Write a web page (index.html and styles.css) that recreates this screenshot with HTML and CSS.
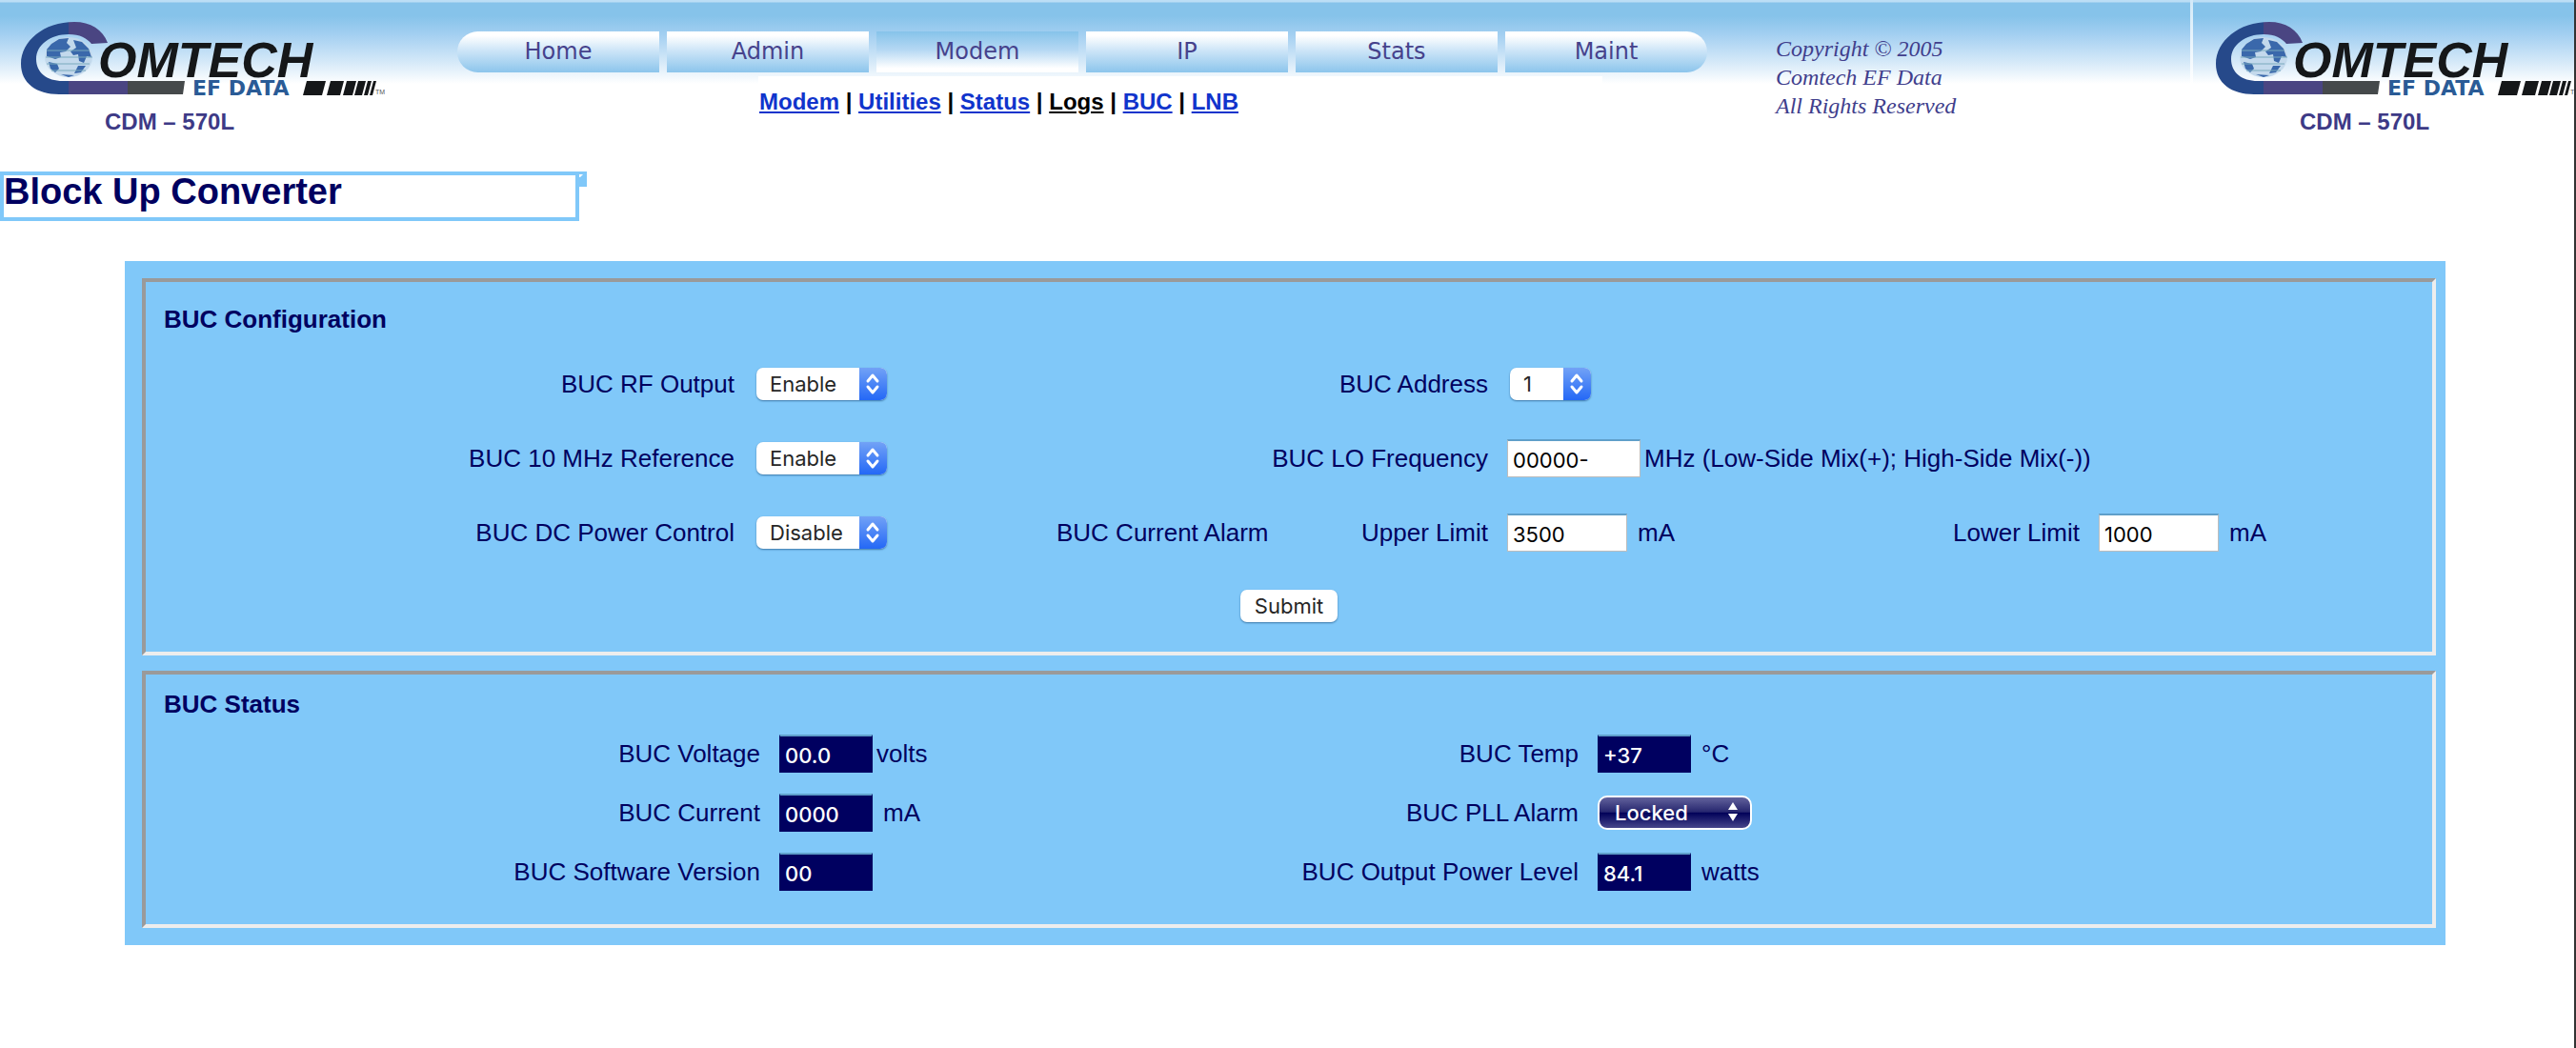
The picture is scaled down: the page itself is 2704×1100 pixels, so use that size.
FILE: index.html
```html
<!DOCTYPE html>
<html lang="en">
<head>
<meta charset="utf-8">
<title>CDM-570L - Block Up Converter</title>
<link rel="stylesheet" href="styles.css">
</head>
<body>
<svg class="defs" width="0" height="0" aria-hidden="true">
  <defs>
    <linearGradient id="swoosh" gradientUnits="userSpaceOnUse" x1="22" y1="0" x2="194" y2="0">
      <stop offset="0.29" stop-color="#26498a"/>
      <stop offset="0.29" stop-color="#4a4582"/>
      <stop offset="0.65" stop-color="#4a4582"/>
      <stop offset="0.65" stop-color="#45494b"/>
    </linearGradient>
    <symbol id="logo" viewBox="0 0 410 140">
      <path fill="url(#swoosh)" d="M113 45 C108 31 95 23 78 23 C46 23 22 43 22 67 C22 87 38 99 62 99 H192 L194 85 H66 C49 85 38 76 38 62 C38 47 53 36 72 36 C84 36 91 40 96 46 Z"/>
      <ellipse cx="72" cy="60" rx="25" ry="21" fill="#c3d9ec"/>
      <path fill="#3a68ab" d="M54 46 L62 41 L72 40 L70 45 L74 49 L69 54 L63 55 L64 60 L58 62 L49 59 L49 52 Z M77 42 L86 44 L93 51 L96 60 L91 59 L88 66 L83 64 L82 57 L77 58 L74 54 L80 50 Z M51 65 L60 67 L62 72 L58 76 L53 72 Z M82 69 L90 69 L85 76 L78 77 Z M64 78 L78 79 L72 81 Z"/>
      <path stroke="#78a9bd" stroke-width="1" fill="none" d="M49 53H94 M48 60H97 M49 67H94 M54 74H90"/>
      <text x="103" y="81" class="logo-name">OMTECH</text>
      <text x="202" y="100" class="logo-sub">EF DATA</text>
      <path fill="#151719" d="M322 85H342L338 100H318Z M347 85H361L357 100H343Z M364 85H374L370 100H360Z M376 85H384L380 100H372Z M386 85H390L386 100H382Z M392 85H395L391 100H388Z"/>
      <text x="394" y="99" class="logo-tm">TM</text>
      <text x="110" y="136" class="logo-model">CDM – 570L</text>
    </symbol>
    <symbol id="chevrons" viewBox="0 0 29 34">
      <path d="M9 14 L14 8 L19 14 M9 20 L14 26 L19 20" fill="none" stroke="#fff" stroke-width="3" stroke-linecap="round" stroke-linejoin="round"/>
    </symbol>
  </defs>
</svg>

<header class="banner">
  <svg class="logo" role="img" aria-label="Comtech EF Data CDM-570L"><use href="#logo"/></svg>
  <div class="navigation">
    <nav class="tabs">
      <a href="#home">Home</a>
      <a href="#admin">Admin</a>
      <a href="#modem" class="current">Modem</a>
      <a href="#ip">IP</a>
      <a href="#stats">Stats</a>
      <a href="#maint">Maint</a>
    </nav>
    <nav class="links">
      <a href="#modem">Modem</a> | <a href="#utilities">Utilities</a> | <a href="#status">Status</a> | <a href="#logs" class="visited">Logs</a> | <a href="#buc">BUC</a> | <a href="#lnb">LNB</a>
    </nav>
  </div>
  <p class="copyright">Copyright © 2005<br>Comtech EF Data<br>All Rights Reserved</p>
  <div class="repeat">
    <svg class="logo" aria-hidden="true"><use href="#logo"/></svg>
  </div>
</header>

<div class="title">
  <h1>Block Up Converter</h1>
  <svg class="corner" width="8" height="16" viewBox="0 0 8 16" aria-hidden="true"><path fill="#80c8f9" d="M0 0H8V16H0Z"/><path fill="#fff" d="M0 3H4L1 6H0Z"/></svg>
</div>

<main class="panel">
  <form class="frame config">
    <h2>BUC Configuration</h2>
    <div class="grid config-grid">
      <label class="c1" for="rf">BUC RF Output</label>
      <span class="select c2"><select id="rf"><option>Enable</option><option>Disable</option></select><svg class="arrows"><use href="#chevrons"/></svg></span>
      <label class="c34" for="address">BUC Address</label>
      <span class="select short c5"><select id="address"><option>1</option><option>2</option></select><svg class="arrows"><use href="#chevrons"/></svg></span>

      <label class="c1" for="ref">BUC 10 MHz Reference</label>
      <span class="select c2"><select id="ref"><option>Enable</option><option>Disable</option></select><svg class="arrows"><use href="#chevrons"/></svg></span>
      <label class="c34" for="lo">BUC LO Frequency</label>
      <span class="field tight wide-field"><input class="long" id="lo" type="text" value="00000-"> MHz (Low-Side Mix(+); High-Side Mix(-))</span>

      <label class="c1" for="dc">BUC DC Power Control</label>
      <span class="select c2"><select id="dc"><option>Disable</option><option>Enable</option></select><svg class="arrows"><use href="#chevrons"/></svg></span>
      <span class="c3">BUC Current Alarm</span>
      <label class="c4" for="upper">Upper Limit</label>
      <span class="field c5"><input id="upper" type="text" value="3500"> mA</span>
      <label class="c6" for="lower">Lower Limit</label>
      <span class="field c7"><input id="lower" type="text" value="1000"> mA</span>
    </div>
    <div class="actions"><button type="submit">Submit</button></div>
  </form>

  <section class="frame status">
    <h2>BUC Status</h2>
    <div class="grid status-grid">
      <label for="voltage">BUC Voltage</label>
      <span class="field tight"><input id="voltage" type="text" value="00.0" readonly> volts</span>
      <label for="temp">BUC Temp</label>
      <span class="field"><input id="temp" type="text" value="+37" readonly> °C</span>

      <label for="current">BUC Current</label>
      <span class="field"><input id="current" type="text" value="0000" readonly> mA</span>
      <label for="pll">BUC PLL Alarm</label>
      <span class="select dark"><select id="pll"><option>Locked</option><option>Unlocked</option></select><svg class="arrows" viewBox="0 0 29 36"><path fill="#fff" d="M4 15L9 7L14 15Z M4 19L9 27L14 19Z"/></svg></span>

      <label for="version">BUC Software Version</label>
      <span class="field"><input id="version" type="text" value="00" readonly></span>
      <label for="power">BUC Output Power Level</label>
      <span class="field"><input id="power" type="text" value="84.1" readonly> watts</span>
    </div>
  </section>
</main>
</body>
</html>
```
FILE: styles.css
```css
* {
  box-sizing: border-box;
}

body {
  margin: 0;
  min-height: 100vh;
  border-right: 2px solid #333;
  background: #fff;
  color: #000060;
  font: 26px/32px "Liberation Sans", Arial, sans-serif;
}

h1,
h2,
p {
  margin: 0;
}

.defs {
  display: block;
}

/* Banner */
.banner {
  display: flex;
  height: 180px;
  overflow: hidden;
  background: linear-gradient(#bcdef5 0, #bcdef5 2px, #86c3ea 3px, #86c3ea 17px, #a3cff1 36px, #d3e8f8 64px, #fff 88px);
}

.logo {
  flex: none;
  width: 410px;
  height: 140px;
}

.logo-name {
  fill: #151719;
  font: italic bold 52px "Liberation Sans", Arial, sans-serif;
}

.logo-sub {
  fill: #2a5b96;
  font: bold 22px "DejaVu Sans", sans-serif;
}

.logo-tm {
  fill: #555;
  font: 7px "Liberation Sans", Arial, sans-serif;
}

.logo-model {
  fill: #3d3a86;
  font: bold 24px "Liberation Sans", Arial, sans-serif;
}

.navigation {
  width: 1312px;
  margin: 33px 0 0 70px;
}

.tabs {
  display: grid;
  grid-template-columns: repeat(6, 1fr);
  gap: 8px;
}

.tabs a {
  height: 43px;
  background: linear-gradient(#fff 10%, #cfe6f8 45%, #8cc5ec);
  color: #46428c;
  font: 24px/43px "DejaVu Sans", sans-serif;
  text-align: center;
  text-decoration: none;
}

.tabs a:first-child {
  border-radius: 22px 0 0 22px;
}

.tabs a:last-child {
  border-radius: 0 22px 22px 0;
}

.tabs .current {
  background: linear-gradient(#86c3ea, #b5d8f3 45%, #fff 90%);
}

.links {
  width: 886px;
  margin: 4px 0 0 316px;
  padding: 13px 0 13px 1px;
  background: #fff;
  color: #000;
  font-size: 24px;
  line-height: 28px;
  font-weight: bold;
}

.links a {
  color: #1034cc;
}

.links .visited {
  color: #000;
}

.copyright {
  margin: 36px 0 0 72px;
  color: #403e8c;
  font: italic 24px/30px "Liberation Serif", "Times New Roman", serif;
}

.repeat {
  width: 403px;
  height: 88px;
  margin-left: auto;
  padding-left: 5px;
  background: linear-gradient(#d3e9f8, #fff) no-repeat 0 0 / 3px 100%;
}

/* Page title */
.title {
  display: flex;
  align-items: flex-start;
}

h1 {
  width: 608px;
  height: 52px;
  border: 4px solid #80c8f9;
  font-size: 38px;
  line-height: 34px;
}

/* Panel */
.panel {
  display: flex;
  flex-direction: column;
  gap: 16px;
  margin: 42px 135px 0 131px;
  padding: 18px 10px 18px 18px;
  background: #80c8f9;
}

.frame {
  border: 4px solid;
  border-color: #9a9a9a #ededed #ededed #9a9a9a;
}

.config {
  padding: 23px 0 11px;
}

.status {
  padding: 15px 0 24px;
}

h2 {
  padding-left: 19px;
  font-size: 26px;
  line-height: 32px;
}

.grid {
  display: grid;
  column-gap: 20px;
  align-items: center;
  white-space: nowrap;
}

.grid label {
  text-align: right;
}

.config-grid {
  grid-template-columns: 618fr 298fr 224fr 209fr 407fr 174fr 350fr;
  grid-auto-rows: 78px;
  margin-top: 13px;
}

.status-grid {
  grid-template-columns: 645fr 418fr 401fr 876fr;
  grid-auto-rows: 62px;
  margin-top: 5px;
}

.c1 { grid-column: 1; }
.c2 { grid-column: 2; }
.c3 { grid-column: 3; }
.c34 { grid-column: 3 / 5; }
.c4 { grid-column: 4; }
.c5 { grid-column: 5; }
.c6 { grid-column: 6; }
.c7 { grid-column: 7; }
.wide-field { grid-column: 5 / 8; }

/* Controls */
.field {
  display: flex;
  align-items: center;
  gap: 11px;
}

.tight {
  gap: 4px;
}

input,
select,
button {
  font: 22px "Inter", sans-serif;
}

input {
  width: 126px;
  height: 40px;
  padding: 3px 0 0 5px;
  border: 1px solid #bdbdbd;
  border-top: 2px solid #5f9fca;
  border-radius: 0;
  background: #fff;
  color: #000;
}

.long {
  width: 140px;
}

.status input {
  width: 98px;
  border-color: #5f9fca #000060 #000060;
  background: #000060;
  color: #fff;
  font-weight: 500;
}

.select {
  display: grid;
  width: 137px;
  height: 34px;
  margin-left: 3px;
}

.short {
  width: 85px;
}

.select select,
.arrows {
  grid-area: 1 / 1;
  height: 100%;
}

.select select {
  width: 100%;
  padding: 0 0 0 14px;
  border: 0;
  border-radius: 7px;
  appearance: none;
  background: #fff;
  box-shadow: 0 1px 2px #3c78a8;
  color: #262626;
}

.arrows {
  width: 29px;
  justify-self: end;
  border-radius: 0 7px 7px 0;
  background: linear-gradient(#72a2f6, #2468f6);
  pointer-events: none;
}

.dark {
  width: 162px;
  height: 36px;
  margin-left: 0;
}

.select.dark select {
  padding-left: 16px;
  border: 2px solid #fff;
  border-radius: 10px;
  background: linear-gradient(#62629c, #26266e 48%, #000058 50%, #46468a);
  box-shadow: none;
  color: #fff;
  font-weight: 500;
}

.dark .arrows {
  background: none;
}

.actions {
  display: flex;
  align-items: center;
  justify-content: center;
  height: 75px;
}

button {
  width: 102px;
  height: 34px;
  padding: 0;
  border: 0;
  border-radius: 7px;
  background: #fff;
  box-shadow: 0 1px 2px #3c78a8;
  color: #262626;
}
```
